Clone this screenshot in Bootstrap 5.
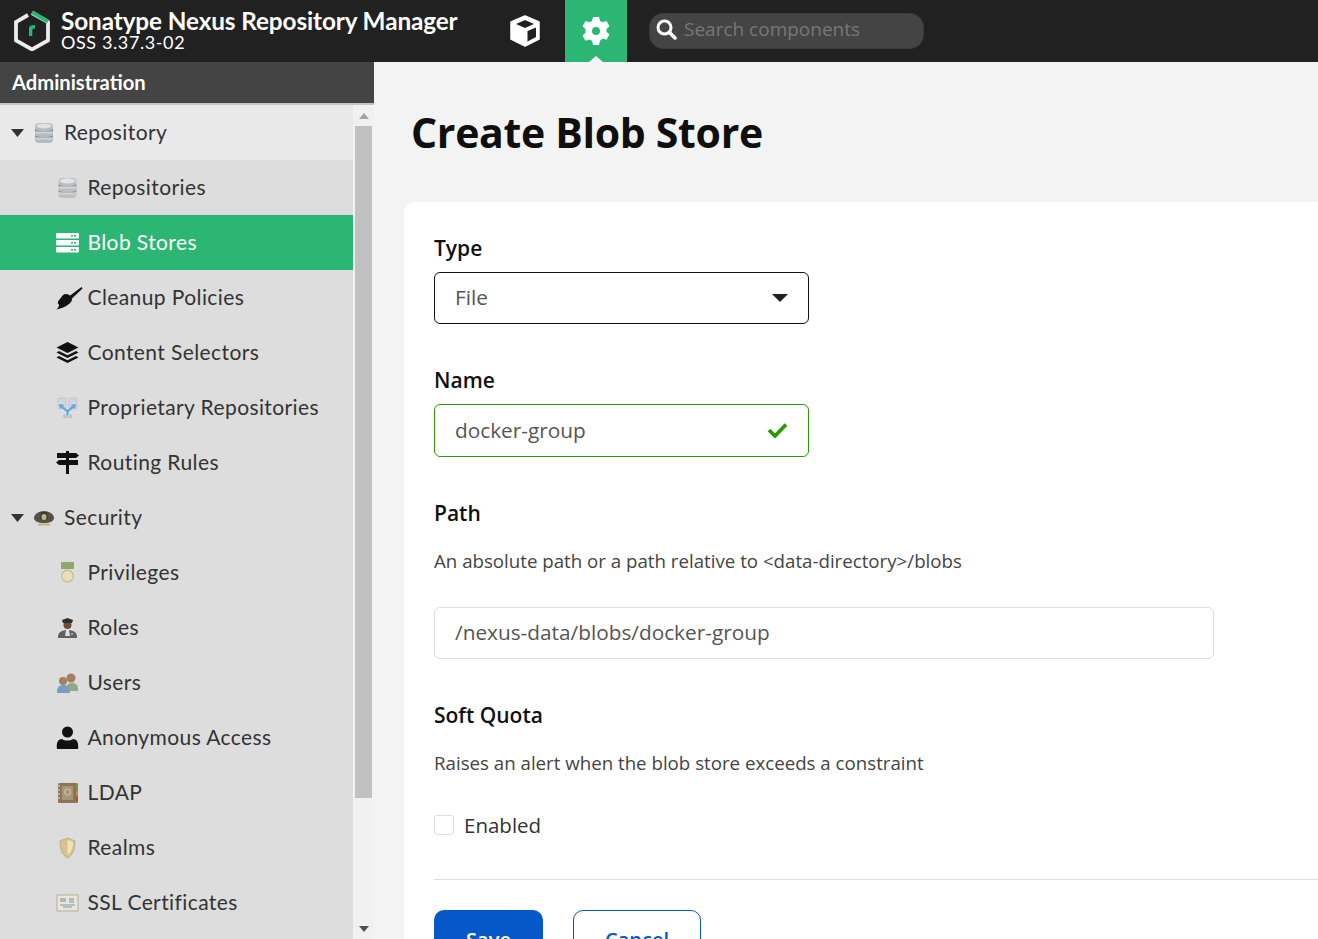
<!DOCTYPE html>
<html lang="en">
<head>
<meta charset="utf-8">
<title>Create Blob Store</title>
<link href="https://cdn.jsdelivr.net/npm/bootstrap@5.3.0/dist/css/bootstrap.min.css" rel="stylesheet">
<style>
html,body{height:939px;overflow:hidden;background:#f3f3f3;font-family:"Open Sans","Noto Sans",sans-serif}
.nx-head{height:62px;background:#212121;color:#fff}
.nx-logo{width:36px;height:40px;margin-left:14px;flex:none}
.nx-brand{margin-left:11px;width:433px;font-family:Lato,sans-serif;line-height:1;padding-bottom:2px}
.nx-brand-t{font-size:24.3px;font-weight:700;line-height:24px;letter-spacing:-.1px}
.nx-brand-s{font-size:18px;line-height:18px;letter-spacing:.6px}
.nx-tab{width:62px;height:62px;flex:none}
.nx-tab-on{background:#2bb673;position:relative;margin-left:9px}
.nx-tab-on::after{content:"";position:absolute;left:24px;bottom:0;border:7px solid transparent;border-top:0;border-bottom:6px solid #f3f3f3}
.nx-search{margin-left:22px;width:275px;height:36px;background:#444;border:1px solid #3c3c3c;border-radius:14px;color:#777;font-size:19px;padding-left:6px;padding-bottom:3px;gap:7px}
.nx-body{height:877px}
.nx-side{width:374px;flex:none;background:#ddd;font-family:Lato,sans-serif}
.nx-side-h{height:43px;background:#444;border-bottom:2px solid #c4c4c4;color:#fff;font-weight:700;font-size:20.2px;padding-left:12px}
.nx-tree{width:353px;overflow:hidden;height:834px}
.nx-row{height:55px;color:#333;font-size:21px;letter-spacing:.4px;flex:none}
.nx-row span{padding-bottom:1px}
.nx-row svg{flex:none}
.nx-l1{padding-left:11px}
.nx-l1 .nx-ic{margin-left:9px;margin-right:9px}
.nx-l2{padding-left:56px}
.nx-l2 .nx-ic{margin-right:8.500px}
.nx-l2 .nx-ic-wide{margin-right:4.500px}
.nx-first{background:#e9e9e9}
.nx-sel{background:#2bb673;color:#fff}
.nx-bar{width:21px;background:#f1f1f1;padding:0 2px;height:834px}
.nx-thumb{width:17px;height:672px;background:#c1c1c1}
.nx-arrow{height:21px;flex:none}
.nx-main{flex:1;min-width:0}
.nx-title{font-size:41px;font-weight:700;color:#0f0f0f;padding:42px 0 0 7px;line-height:56px;height:140px;letter-spacing:-.3px;margin:0 0 0 30px}
.nx-panel{background:#fff;border-radius:10px 0 0 0;margin-left:30px;padding:31px 30px 0;height:737px;width:914px;overflow:hidden}
.nx-lab{font-size:21px;font-weight:600;color:#111;line-height:30px;margin:0}
.nx-gap{margin-top:41px}
.nx-help{font-size:18.700px;color:#444;line-height:26px;margin-top:20px}
.nx-field{height:52px;border-radius:6px;width:375px;font-size:20.800px;padding:0 20px;color:#555}
.nx-select{border:1px solid #111;margin-top:9px}
.nx-valid{border:1px solid #2c9a06;height:53px;margin-top:9px}
.nx-valid svg{margin-bottom:2px}
.nx-path{width:780px;border:1px solid #dddde8;margin-top:33px;height:52px}
.nx-check{width:20px;height:20px;border:1px solid #dddde8;border-radius:3px;flex:none}
.nx-checkrow{gap:10px;margin-top:37px;height:24px;font-size:20.500px;color:#333}
.nx-rule{border-top:1px solid #dddde8;margin:42px 0 30px;height:0;width:900px}
.nx-btn{height:60px;font-size:20px;font-weight:600;border-radius:10px;display:flex;align-items:center;justify-content:center}
.nx-save{width:109px;background:#0558c8;color:#fff}
.nx-cancel{width:128px;background:#fff;color:#0558c8;border:1px solid #0558c8;margin-left:30px}
</style>
</head>
<body>
<header class="nx-head d-flex align-items-center">
  <svg class="nx-logo" viewBox="0 0 36 40"><path d="M18 2 34 11V29.500L18 38.500 2 29.500V11L14 4" fill="none" stroke="#ececec" stroke-width="3.800"/><path d="M18 1 34 10.500" fill="none" stroke="#2bb673" stroke-width="3.800"/><path d="M15 25V17C15 15 17 14 21 14V17.500C19 17.500 18.300 18 18.300 19.500V25Z" fill="#2bb673"/></svg>
  <div class="nx-brand">
    <div class="nx-brand-t">Sonatype Nexus Repository Manager</div>
    <div class="nx-brand-s">OSS 3.37.3-02</div>
  </div>
  <div class="nx-tab d-flex align-items-center justify-content-center">
    <svg width="32" height="32" viewBox="0 0 32 32"><path d="M16 1 30 7V24L16 31 2 24V7Z" fill="#fff" stroke="#fff" stroke-linejoin="round" stroke-width="1.500"/><path d="M16 5 25 9 16 13 7 9Z" fill="#212121"/><path d="M18.500 16 27 12.500V22L18.500 26.500Z" fill="#212121"/></svg>
  </div>
  <div class="nx-tab nx-tab-on d-flex align-items-center justify-content-center">
    <svg width="30" height="30" viewBox="0 0 30 30"><path fill="#fff" fill-rule="evenodd" d="M12 1h6l1 4 2.500 1.300 4-1.300 3 5.200-3 2.800v2.800l3 2.800-3 5.200-4-1.300L19 24.800l-1 4.200h-6l-1-4.200-2.500-1.300-4 1.300-3-5.200 3-2.800V13l-3-2.800 3-5.200 4 1.300L11 5Zm3 10a4 4 0 1 0 0 8 4 4 0 0 0 0-8Z"/></svg>
  </div>
  <div class="nx-search d-flex align-items-center">
    <svg width="21" height="21" viewBox="0 0 21 21"><circle cx="8.500" cy="8.500" r="6.500" fill="none" stroke="#fff" stroke-width="3"/><path d="M13.500 13.500 19 19" stroke="#fff" stroke-width="3.500" stroke-linecap="round"/></svg>
    <span>Search components</span>
  </div>
</header>
<div class="nx-body d-flex">
  <aside class="nx-side">
    <div class="nx-side-h d-flex align-items-center">Administration</div>
    <div class="d-flex">
      <nav class="nx-tree d-flex flex-column">
        <div class="nx-row nx-l1 nx-first d-flex align-items-center">
          <svg width="13" height="8" viewBox="0 0 13 8"><path d="M0 0H13L6.500 8Z" fill="#333"/></svg>
          <svg class="nx-ic" width="22" height="22" viewBox="0 0 22 22"><rect x="2" y="1" width="18" height="20" rx="4" fill="#b4bcc2"/><path d="M2 8c4 2.500 14 2.500 18 0M2 14c4 2.500 14 2.500 18 0" fill="none" stroke="#7f8a91" stroke-width="1.200"/><ellipse cx="11" cy="4" rx="7.500" ry="2.500" fill="#dfe3e6"/><rect x="3" y="9.500" width="16" height="2" fill="#cdd3d7"/><rect x="3" y="15.500" width="16" height="2" fill="#cdd3d7"/></svg>
          <span>Repository</span>
        </div>
        <div class="nx-row nx-l2 d-flex align-items-center">
          <svg class="nx-ic" width="23" height="22" viewBox="0 0 22 22"><rect x="2" y="1" width="18" height="20" rx="4" fill="#bcc0c2"/><path d="M2 8c4 2.500 14 2.500 18 0M2 14c4 2.500 14 2.500 18 0" fill="none" stroke="#8b9194" stroke-width="1.200"/><ellipse cx="11" cy="4" rx="7.500" ry="2.500" fill="#e2e4e5"/><rect x="3" y="9.500" width="16" height="2" fill="#d3d6d7"/><rect x="3" y="15.500" width="16" height="2" fill="#d3d6d7"/></svg>
          <span>Repositories</span>
        </div>
        <div class="nx-row nx-l2 nx-sel d-flex align-items-center">
          <svg class="nx-ic" width="23" height="20" viewBox="0 0 23 20"><g fill="#fff"><rect width="23" height="5.500" y="0" rx="1"/><rect width="23" height="5.500" y="7" rx="1"/><rect width="23" height="5.500" y="14" rx="1"/></g><g fill="#2bb673"><rect x="15" y="2" width="2" height="1.500"/><rect x="18" y="2" width="2" height="1.500"/><rect x="15" y="9" width="2" height="1.500"/><rect x="18" y="9" width="2" height="1.500"/><rect x="15" y="16" width="2" height="1.500"/><rect x="18" y="16" width="2" height="1.500"/></g></svg>
          <span>Blob Stores</span>
        </div>
        <div class="nx-row nx-l2 d-flex align-items-center">
          <svg class="nx-ic nx-ic-wide" width="27" height="24" viewBox="0 0 27 24"><path d="M13.500 10 25.500 1l1 1.500L15.500 13Z" fill="#111"/><path d="M10 8c3 0 6 3 6 6-1 4-8 8-15.500 9.500C2 22 3.500 20 3 18.500 1.500 18 1 16 4 13c2-3 3-5 6-5Z" fill="#111"/></svg>
          <span>Cleanup Policies</span>
        </div>
        <div class="nx-row nx-l2 d-flex align-items-center">
          <svg class="nx-ic" width="23" height="23" viewBox="0 0 23 23"><path d="M11.500 1 22.500 6.500 11.500 12 .5 6.500Z" fill="#111"/><path d="M3 10 .5 11.500 11.500 17 22.500 11.500 20 10 11.500 14.300Z" fill="#111"/><path d="M3 15 .5 16.500 11.500 22 22.500 16.500 20 15 11.500 19.300Z" fill="#111"/></svg>
          <span>Content Selectors</span>
        </div>
        <div class="nx-row nx-l2 d-flex align-items-center">
          <svg class="nx-ic" width="23" height="22" viewBox="0 0 23 22"><rect x="2" y="1" width="8" height="11" rx="1.500" fill="#cfd5da" stroke="#aeb6bc" stroke-width=".6"/><rect x="13" y="1" width="8" height="11" rx="1.500" fill="#cfd5da" stroke="#aeb6bc" stroke-width=".6"/><rect x="7" y="17" width="9" height="4" rx="1.500" fill="#bfc3c6"/><path d="M10 19V15L5.500 11.500 4 13.500 2 6.500 9 7 7.500 9 11.500 12.500 15.500 9 14 7 21 6.500 19 13.500 17.500 11.500 13 15V19Z" fill="#6ba6d8" stroke="#e7f0f7" stroke-width=".7"/></svg>
          <span>Proprietary Repositories</span>
        </div>
        <div class="nx-row nx-l2 d-flex align-items-center">
          <svg class="nx-ic" width="23" height="23" viewBox="0 0 23 23"><rect x="10" y="0" width="3" height="23" fill="#111"/><path d="M1 2h19l3 2.500L20 7H1Z" fill="#111"/><path d="M22 9H3L0 11.500 3 14h19Z" fill="#111"/></svg>
          <span>Routing Rules</span>
        </div>
        <div class="nx-row nx-l1 d-flex align-items-center">
          <svg width="13" height="8" viewBox="0 0 13 8"><path d="M0 0H13L6.500 8Z" fill="#333"/></svg>
          <svg class="nx-ic" width="22" height="18" viewBox="0 0 22 18"><path d="M1 9C1 5 6 2 11 2s10 3 10 7c0 3-4 5-10 5S1 12 1 9Z" fill="#55504a"/><path d="M8 3h6l1 7H7Z" fill="#3c3833"/><ellipse cx="11" cy="8" rx="2.500" ry="3" fill="#c6b37c"/><path d="M5 14.500h12v2H5Z" fill="#c6b37c"/></svg>
          <span>Security</span>
        </div>
        <div class="nx-row nx-l2 d-flex align-items-center">
          <svg class="nx-ic" width="23" height="22" viewBox="0 0 23 22"><rect x="5" y="0" width="13" height="7" fill="#8fa872"/><circle cx="11.500" cy="14" r="6.500" fill="#cdb98c"/><circle cx="11.500" cy="14" r="5.200" fill="#eadfb9"/></svg>
          <span>Privileges</span>
        </div>
        <div class="nx-row nx-l2 d-flex align-items-center">
          <svg class="nx-ic" width="23" height="22" viewBox="0 0 23 22"><path d="M2 20c0-5 4-7 9.500-7s9.500 2 9.500 7v1H2Z" fill="#5d6165"/><path d="M10 13h3l1 6h-5Z" fill="#e0e0e0"/><circle cx="11.500" cy="8" r="4" fill="#6d4d32"/><path d="M6 3 11.500 1 17 3 16 6H7Z" fill="#2e2e2e"/><rect x="15" y="16" width="2" height="2" fill="#caa347"/></svg>
          <span>Roles</span>
        </div>
        <div class="nx-row nx-l2 d-flex align-items-center">
          <svg class="nx-ic" width="23" height="22" viewBox="0 0 23 22"><path d="M10 17c0-4 2-6 6-6s6 2 6 6v2H10Z" fill="#90ab80"/><circle cx="15" cy="6" r="4.500" fill="#a47f61"/><path d="M1 20c0-5 2-7 6.500-7s6.500 2 6.500 7v1H1Z" fill="#7b9dbd"/><circle cx="7" cy="9" r="4" fill="#a47f61"/></svg>
          <span>Users</span>
        </div>
        <div class="nx-row nx-l2 d-flex align-items-center">
          <svg class="nx-ic" width="23" height="23" viewBox="0 0 23 23"><circle cx="11.500" cy="6" r="5.500" fill="#111"/><path d="M1 23c-1-6 1-10 5-10 3 2 8 2 11 0 4 0 6 4 5 10Z" fill="#111"/></svg>
          <span>Anonymous Access</span>
        </div>
        <div class="nx-row nx-l2 d-flex align-items-center">
          <svg class="nx-ic" width="23" height="22" viewBox="0 0 23 22"><rect x="2" y="1" width="20" height="20" rx="1.500" fill="#8d7456"/><rect x="20" y="3" width="2" height="5" fill="#739a4f"/><rect x="20" y="9" width="2" height="5" fill="#c48b3c"/><rect x="20" y="15" width="2" height="4" fill="#b44a36"/><rect x="6" y="4" width="11" height="14" fill="#a89477"/><circle cx="11.500" cy="10" r="3" fill="none" stroke="#d3c8b4"/><path d="M1 4h3M1 8h3M1 12h3M1 16h3" stroke="#c9c3b8" stroke-width="1.500"/></svg>
          <span>LDAP</span>
        </div>
        <div class="nx-row nx-l2 d-flex align-items-center">
          <svg class="nx-ic" width="23" height="22" viewBox="0 0 23 22"><path d="M11.500 1 19 4c0 8-2 14-7.500 17C6 18 4 12 4 4Z" fill="#d6c48f" stroke="#bcae8b"/><path d="M11.500 3 17 5c0 6-2 11-5.500 13Z" fill="#eee3bb"/></svg>
          <span>Realms</span>
        </div>
        <div class="nx-row nx-l2 d-flex align-items-center">
          <svg class="nx-ic" width="23" height="18" viewBox="0 0 23 18"><rect x="1" y="1" width="21" height="16" fill="#e9e6dc" stroke="#b8ad98"/><rect x="4" y="4" width="6" height="4" fill="#b4b7b2"/><rect x="13" y="4" width="5" height="5" fill="#b4bcc2"/><path d="M4 11h15M7 13h9" stroke="#7f96ac"/></svg>
          <span>SSL Certificates</span>
        </div>
      </nav>
      <div class="nx-bar d-flex flex-column align-items-center">
        <div class="nx-arrow d-flex align-items-center justify-content-center"><svg width="10" height="6" viewBox="0 0 10 6"><path d="M5 0 10 6H0Z" fill="#a3a3a3"/></svg></div>
        <div class="nx-thumb"></div>
        <div class="flex-grow-1"></div>
        <div class="nx-arrow d-flex align-items-center justify-content-center"><svg width="10" height="6" viewBox="0 0 10 6"><path d="M0 0H10L5 6Z" fill="#505050"/></svg></div>
      </div>
    </div>
  </aside>
  <main class="nx-main">
    <h1 class="nx-title">Create Blob Store</h1>
    <section class="nx-panel">
      <p class="nx-lab">Type</p>
      <div class="nx-field nx-select d-flex align-items-center justify-content-between">
        <span>File</span>
        <svg width="16" height="8" viewBox="0 0 16 8"><path d="M0 0H16L8 8Z" fill="#212121"/></svg>
      </div>
      <p class="nx-lab nx-gap">Name</p>
      <div class="nx-field nx-valid d-flex align-items-center justify-content-between">
        <span>docker-group</span>
        <svg width="21" height="16" viewBox="0 0 21 16"><path d="M2 8 8 14 19 2.500" fill="none" stroke="#2c9a06" stroke-width="3.800"/></svg>
      </div>
      <p class="nx-lab nx-gap">Path</p>
      <div class="nx-help">An absolute path or a path relative to &lt;data-directory&gt;/blobs</div>
      <div class="nx-field nx-path d-flex align-items-center"><span>/nexus-data/blobs/docker-group</span></div>
      <p class="nx-lab nx-gap">Soft Quota</p>
      <div class="nx-help">Raises an alert when the blob store exceeds a constraint</div>
      <div class="nx-checkrow d-flex align-items-center">
        <div class="nx-check"></div>
        <span>Enabled</span>
      </div>
      <div class="nx-rule"></div>
      <div class="d-flex">
        <div class="nx-btn nx-save">Save</div>
        <div class="nx-btn nx-cancel">Cancel</div>
      </div>
    </section>
  </main>
</div>
</body>
</html>
